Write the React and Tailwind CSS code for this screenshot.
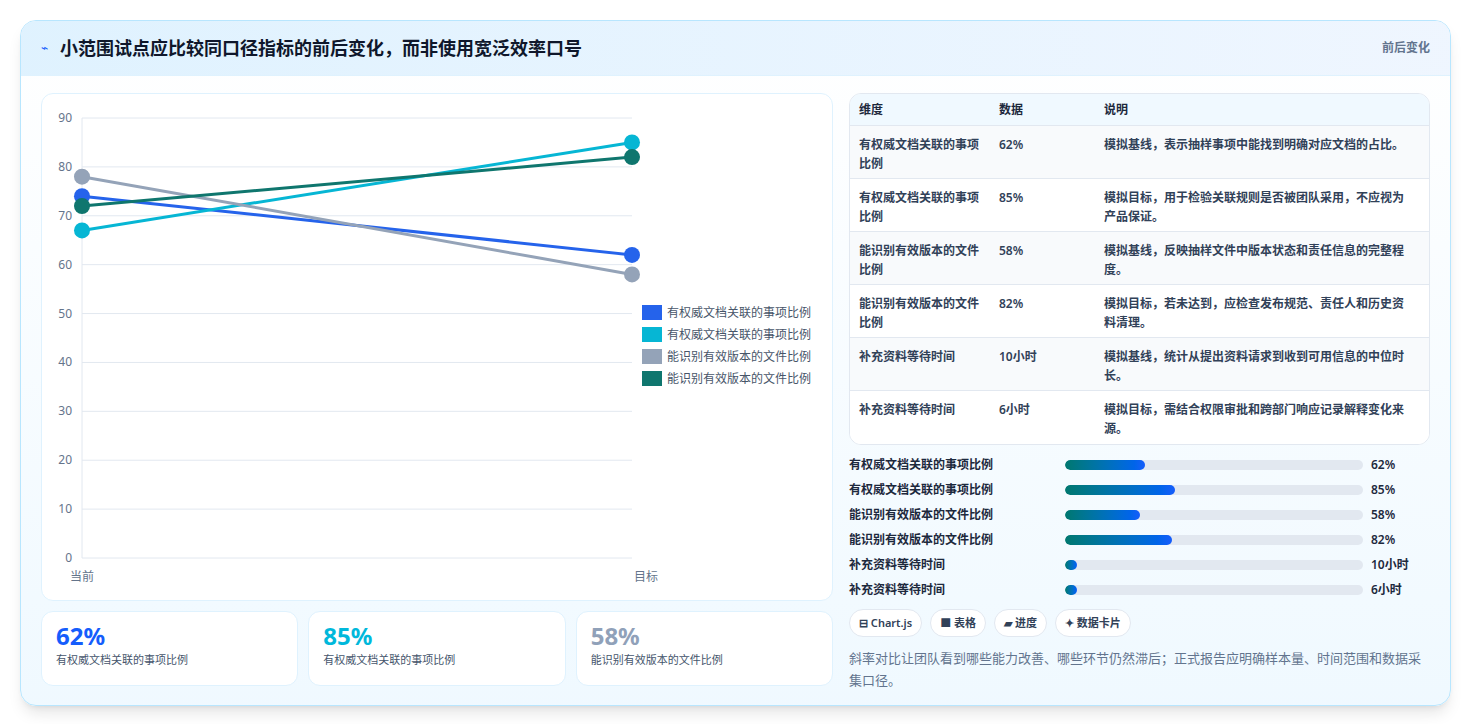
import React from "react";

const series = [
  { name: "有权威文档关联的事项比例", color: "#2563eb", a: 74, b: 62 },
  { name: "有权威文档关联的事项比例", color: "#06b6d4", a: 67, b: 85 },
  { name: "能识别有效版本的文件比例", color: "#94a3b8", a: 78, b: 58 },
  { name: "能识别有效版本的文件比例", color: "#0f766e", a: 72, b: 82 },
];

const rows = [
  ["有权威文档关联的事项比例", "62%", "模拟基线，表示抽样事项中能找到明确对应文档的占比。"],
  ["有权威文档关联的事项比例", "85%", "模拟目标，用于检验关联规则是否被团队采用，不应视为产品保证。"],
  ["能识别有效版本的文件比例", "58%", "模拟基线，反映抽样文件中版本状态和责任信息的完整程度。"],
  ["能识别有效版本的文件比例", "82%", "模拟目标，若未达到，应检查发布规范、责任人和历史资料清理。"],
  ["补充资料等待时间", "10小时", "模拟基线，统计从提出资料请求到收到可用信息的中位时长。"],
  ["补充资料等待时间", "6小时", "模拟目标，需结合权限审批和跨部门响应记录解释变化来源。"],
];

const bars = [
  ["有权威文档关联的事项比例", "62%", 27],
  ["有权威文档关联的事项比例", "85%", 37],
  ["能识别有效版本的文件比例", "58%", 25],
  ["能识别有效版本的文件比例", "82%", 36],
  ["补充资料等待时间", "10小时", 4],
  ["补充资料等待时间", "6小时", 4],
];

function Chart() {
  const x0 = 40, x1 = 590, yTop = 24, yBot = 464;
  const y = (v) => yBot - ((yBot - yTop) * v) / 90;
  return (
    <svg width="790" height="506" className="block">
      {[0, 10, 20, 30, 40, 50, 60, 70, 80, 90].map((v) => (
        <g key={v}>
          <line x1={x0} x2={x1} y1={y(v)} y2={y(v)} stroke="#e2e8f0" />
          <text x={x0 - 10} y={y(v) + 4} textAnchor="end" fontSize="12" fill="#64748b">{v}</text>
        </g>
      ))}
      <line x1={x0} x2={x0} y1={yTop} y2={yBot} stroke="#e2e8f0" />
      <text x={x0} y={yBot + 23} textAnchor="middle" fontSize="12" fill="#64748b">当前</text>
      <text x={x1 + 14} y={yBot + 23} textAnchor="middle" fontSize="12" fill="#64748b">目标</text>
      {series.map((s, i) => (
        <g key={i}>
          <line x1={x0} y1={y(s.a)} x2={x1} y2={y(s.b)} stroke={s.color} strokeWidth="3" />
          <circle cx={x0} cy={y(s.a)} r="8" fill={s.color} />
          <circle cx={x1} cy={y(s.b)} r="8" fill={s.color} />
        </g>
      ))}
      {series.map((s, i) => (
        <g key={"l" + i}>
          <rect x="600" y={211 + i * 22} width="20" height="15" fill={s.color} />
          <text x="625" y={223 + i * 22} fontSize="12" fill="#475569">{s.name}</text>
        </g>
      ))}
    </svg>
  );
}

export default function App() {
  return (
    <div className="min-h-[724px] bg-white px-5 pt-5" style={{ fontFamily: "'Noto Sans', 'Noto Sans CJK SC', sans-serif" }}>
      <div className="rounded-2xl border border-sky-200 bg-gradient-to-b from-white to-sky-50 shadow-lg overflow-hidden">
        <div className="flex items-center justify-between h-[55px] px-5 bg-gradient-to-r from-sky-100 to-blue-50 border-b border-sky-100">
          <div className="flex items-center gap-3">
            <span className="text-blue-600 text-xs">⌁</span>
            <h1 className="text-lg font-bold text-slate-900">小范围试点应比较同口径指标的前后变化，而非使用宽泛效率口号</h1>
          </div>
          <span className="text-xs font-semibold text-slate-500">前后变化</span>
        </div>
        <div className="flex gap-4 px-5 pt-[17px] pb-[14px]">
          <div className="w-[792px] flex flex-col gap-[10px]">
            <div className="rounded-xl border border-sky-100 bg-white">
              <Chart />
            </div>
            <div className="grid grid-cols-3 gap-[10px]">
              {[["62%", "text-blue-600"], ["85%", "text-cyan-500"], ["58%", "text-slate-400"]].map(([v, c], i) => (
                <div key={i} className="rounded-xl border border-sky-100 bg-white px-[14px] pt-[8px] h-[75px]">
                  <div className="text-2xl font-bold leading-8"><span className={c}>{v}</span></div>
                  <div className="text-[11px] text-slate-600">{series[i].name}</div>
                </div>
              ))}
            </div>
          </div>
          <div className="flex-1 flex flex-col">
            <div className="rounded-xl border border-slate-200 overflow-hidden bg-white text-xs font-semibold text-slate-700">
              <div className="grid grid-cols-[140px_105px_1fr] bg-sky-50 h-[32px] items-center px-[9px] border-b border-slate-200 text-slate-800">
                <span>维度</span><span>数据</span><span>说明</span>
              </div>
              {rows.map((r, i) => (
                <div key={i} className={"grid grid-cols-[140px_105px_1fr] px-[9px] pt-[9px] h-[53px] leading-[19px] border-b border-slate-200 last:border-b-0 " + (i % 2 ? "bg-white" : "bg-slate-50")}>
                  <span className="pr-3">{r[0]}</span><span>{r[1]}</span><span className="pr-4">{r[2]}</span>
                </div>
              ))}
            </div>
            <div className="flex flex-col gap-[7px] mt-[11px]">
              {bars.map((b, i) => (
                <div key={i} className="flex items-center h-[18px] text-xs font-semibold text-slate-800">
                  <span className="w-[216px]">{b[0]}</span>
                  <div className="w-[298px] h-[10px] rounded-full bg-slate-200 overflow-hidden">
                    <div className="h-full rounded-full bg-gradient-to-r from-teal-700 to-blue-600" style={{ width: b[2] + "%" }} />
                  </div>
                  <span className="ml-2">{b[1]}</span>
                </div>
              ))}
            </div>
            <div className="flex gap-2 mt-[10px]">
              {["⊟ Chart.js", "■ 表格", "▰ 进度", "✦ 数据卡片"].map((t) => (
                <span key={t} className="rounded-full border border-slate-200 bg-white px-[9px] h-[28px] flex items-center text-[11px] font-semibold text-slate-700">{t}</span>
              ))}
            </div>
            <p className="mt-[10px] text-[13px] leading-[22px] text-slate-500">斜率对比让团队看到哪些能力改善、哪些环节仍然滞后；正式报告应明确样本量、时间范围和数据采集口径。</p>
          </div>
        </div>
      </div>
    </div>
  );
}
